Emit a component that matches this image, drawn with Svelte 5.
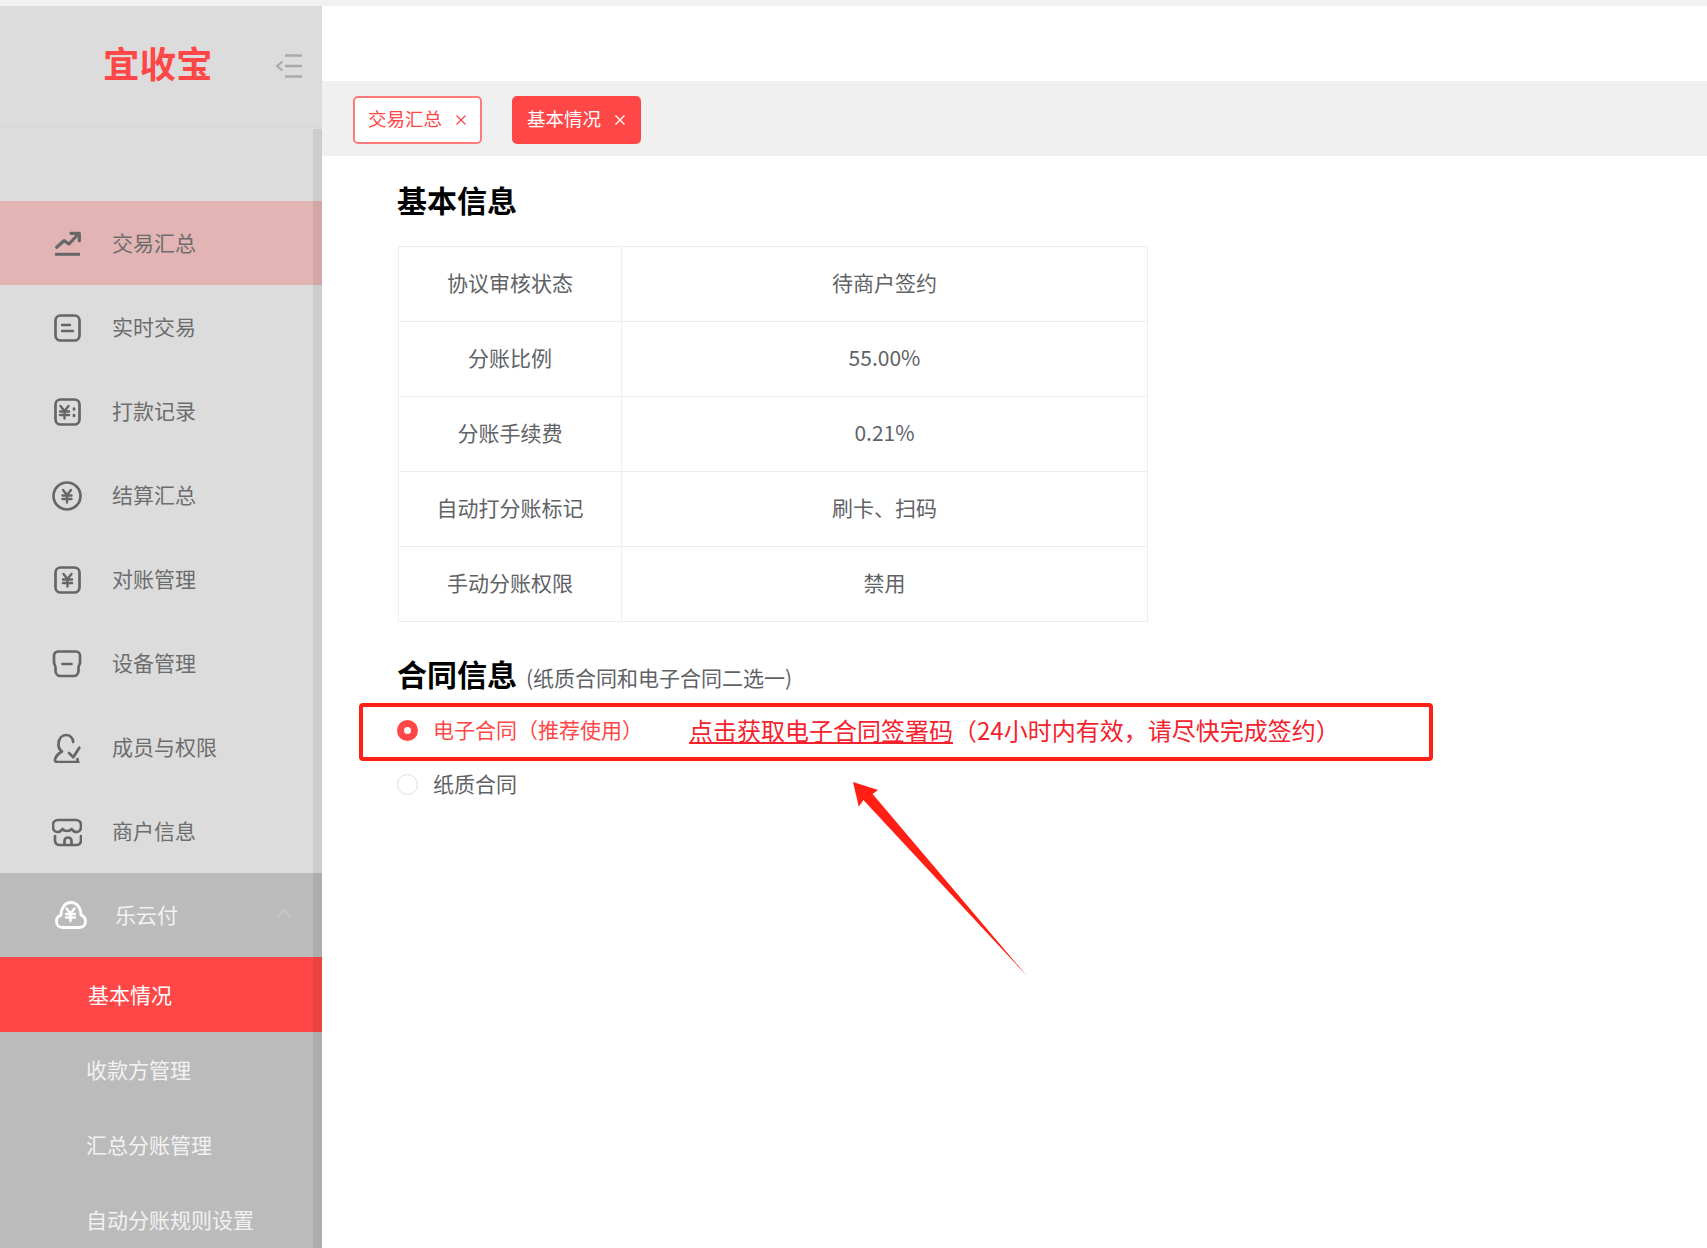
<script lang="ts">
    const menu = [
        { icon: 'trend', label: '交易汇总', active: true },
        { icon: 'doc', label: '实时交易' },
        { icon: 'pay', label: '打款记录' },
        { icon: 'settle', label: '结算汇总' },
        { icon: 'check', label: '对账管理' },
        { icon: 'device', label: '设备管理' },
        { icon: 'member', label: '成员与权限' },
        { icon: 'shop', label: '商户信息' }
    ];

    const subMenu = [
        { label: '基本情况', active: true },
        { label: '收款方管理' },
        { label: '汇总分账管理' },
        { label: '自动分账规则设置' }
    ];

    const rows = [
        ['协议审核状态', '待商户签约'],
        ['分账比例', '55.00%'],
        ['分账手续费', '0.21%'],
        ['自动打分账标记', '刷卡、扫码'],
        ['手动分账权限', '禁用']
    ];

    const tabs = [
        { label: '交易汇总', active: false },
        { label: '基本情况', active: true }
    ];
</script>

{#snippet yen(cx: number, cy: number)}
    <path d={`M${cx - 4} ${cy - 6}l4 5 4-5M${cx} ${cy - 1}v7.500M${cx - 4.500} ${cy - 0.500}h9M${cx - 4.500} ${cy + 3}h9`} stroke-width="2.400" />
{/snippet}

<div class="page">
    <div class="topstrip"></div>
    <div class="body">
        <aside class="sidebar">
            <div class="brand">
                <span class="logo">宜收宝</span>
                <svg class="collapse" viewBox="0 0 27 24" fill="none" stroke="currentColor" stroke-width="2.600">
                    <path d="M10 2h17M10 12.500h17M10 23h17" />
                    <path d="M7.500 8l-5.500 4.500 5.500 4.500" stroke-width="2" />
                </svg>
            </div>
            <nav class="nav">
                {#each menu as m}
                    <div class="item" class:active={m.active}>
                        <svg class="icon" viewBox="0 0 30 30" fill="none" stroke="currentColor" stroke-width="2.700" stroke-linecap="round" stroke-linejoin="round">
                            {#if m.icon === 'trend'}
                                <path d="M4.700 18.300L12 11.700l5 3.300L26.300 5" stroke-width="3.200" />
                                <path d="M19 4.300h8.300v7.400" stroke-width="3.200" />
                                <path d="M3 25.300h25" stroke-width="3" stroke-linecap="butt" />
                            {:else if m.icon === 'doc'}
                                <rect x="3.500" y="2.500" width="24" height="25" rx="5" />
                                <path d="M10 12h8M10 18h11" stroke-width="2.400" />
                            {:else if m.icon === 'pay'}
                                <rect x="3.500" y="2.500" width="24" height="25" rx="5" />
                                {@render yen(12.500, 15)}
                                <path d="M22 11.500v1M22 18v1" />
                            {:else if m.icon === 'settle'}
                                <circle cx="15" cy="15" r="13.500" />
                                {@render yen(15, 15)}
                            {:else if m.icon === 'check'}
                                <rect x="3.500" y="2.500" width="24" height="25" rx="5" />
                                {@render yen(15.500, 15)}
                            {:else if m.icon === 'device'}
                                <path d="M6 2.500h18a4 4 0 0 1 4 4v7c0 2-1.500 3-1.500 5v3.500a5 5 0 0 1-5 5H8.500a5 5 0 0 1-5-5V18.500c0-2-1.500-3-1.500-5v-7a4 4 0 0 1 4-4z" />
                                <path d="M10.500 15h9" />
                            {:else if m.icon === 'member'}
                                <path d="M26.300 29H5c-2 0-2.500-2-1.500-4 1-2.500 3.500-5 6.500-6.500-2.500-2-4-5-3.500-8C7 5.500 10 2 14 2s6.800 3 7.200 7" />
                                <path d="M17 20l4.300 4.300 6-9.600" />
                                <path d="M25.500 26v3" />
                            {:else}
                                <path d="M6 3h18a5 5 0 0 1 5 5v2c0 3-2 5-4.500 5-2 0-4-1.500-5-3-1 1.500-3 2-4.500 2s-3.500-.5-4.500-2c-1 1.500-3 3-5 3-2.500 0-4.500-2-4.500-5V8a5 5 0 0 1 5-5z" />
                                <path d="M3 19v4.500A4.500 4.500 0 0 0 7.500 28h17a4.500 4.500 0 0 0 4.500-4.500V19" />
                                <path d="M12.500 27v-3a3.500 3.500 0 0 1 7 0v3" />
                            {/if}
                        </svg>
                        <span>{m.label}</span>
                    </div>
                {/each}

                <div class="group">
                    <svg class="cloud" viewBox="0 0 32 28" fill="none" stroke="currentColor" stroke-width="2.800" stroke-linecap="round" stroke-linejoin="round">
                        <path d="M7.500 26.500C4 26.500 1.500 24 1.500 20.500 1.500 17.500 3.500 15 6 14.200 6 7 10 1.500 16 1.500S26 7 26 14.200c2.500.8 4.500 3.300 4.500 6.300 0 3.500-2.500 6-6 6z" />
                        {@render yen(15.500, 13.500)}
                    </svg>
                    <span>乐云付</span>
                    <svg class="chevron" viewBox="0 0 16 9" fill="none" stroke="currentColor" stroke-width="1.300">
                        <path d="M1 8l7-7 7 7" />
                    </svg>
                </div>
                {#each subMenu as s}
                    <div class="subitem" class:active={s.active}><span>{s.label}</span></div>
                {/each}
            </nav>
            <div class="scrollbar"></div>
        </aside>

        <main class="main">
            <div class="tabs">
                {#each tabs as t}
                    <div class="tab" class:active={t.active}>
                        <span>{t.label}</span>
                        <svg viewBox="0 0 12 12" fill="none" stroke="currentColor" stroke-width="1.300">
                            <path d="M1.500 1.500l9 9M10.500 1.500l-9 9" />
                        </svg>
                    </div>
                {/each}
            </div>

            <section class="content">
                <h2 class="title">基本信息</h2>
                <table class="info">
                    <tbody>
                        {#each rows as r}
                            <tr>
                                <td class="key">{r[0]}</td>
                                <td>{r[1]}</td>
                            </tr>
                        {/each}
                    </tbody>
                </table>

                <h2 class="title contract">合同信息<small>(纸质合同和电子合同二选一)</small></h2>

                <div class="radio-row selected">
                    <span class="radio on"></span>
                    <span class="radio-label">电子合同（推荐使用）</span>
                    <span class="sign"><u>点击获取电子合同签署码</u>（24小时内有效，请尽快完成签约）</span>
                </div>
                <div class="radio-row">
                    <span class="radio"></span>
                    <span class="radio-label">纸质合同</span>
                </div>
            </section>
        </main>
    </div>

    <svg class="arrow" viewBox="0 0 190 205" aria-hidden="true">
        <polygon points="3,4 28,12 22.600,16 177,198 13.400,22 8.800,28.700" />
    </svg>
</div>

<style>
    :global(body) {
        margin: 0;
        background: #fff;
    }

    .page {
        position: relative;
        height: 1248px;
        overflow: hidden;
        font-family: "Noto Sans CJK SC", "Noto Sans", sans-serif;
        font-size: 21px;
        color: #606266;
    }

    .topstrip {
        height: 6px;
        background: #f1f1f1;
    }

    .body {
        display: flex;
        height: 1242px;
    }

    /* sidebar */
    .sidebar {
        position: relative;
        flex: 0 0 322px;
        background: #dcdcdc;
        overflow: hidden;
    }

    .brand {
        height: 118px;
        padding-bottom: 2px;
        display: flex;
        align-items: center;
        border-bottom: 1px solid #d6d6d6;
    }

    .logo {
        margin-left: 103px;
        margin-bottom: 4px;
        font-size: 36.500px;
        font-weight: 700;
        line-height: 1;
        color: #ff4747;
    }

    .collapse {
        margin-left: 62px;
        width: 27px;
        height: 25px;
        color: #a9a9a9;
    }

    .nav {
        padding-top: 74px;
    }

    .item {
        height: 84px;
        display: flex;
        align-items: center;
        padding-left: 52px;
        color: #6d6d6d;
    }

    .item span,
    .subitem span {
        padding-bottom: 2px;
    }

    .item.active {
        background: #e2b4b4;
    }

    .icon {
        flex: 0 0 30px;
        width: 30px;
        height: 30px;
        margin-top: 2px;
        margin-right: 30px;
        color: #666;
    }

    .group {
        height: 84px;
        display: flex;
        align-items: center;
        padding-left: 55px;
        background: #bbb;
        color: #f2f2f2;
    }

    .group span {
        padding-bottom: 3px;
    }

    .cloud {
        width: 32px;
        height: 28px;
        margin-right: 28px;
        color: #fff;
    }

    .chevron {
        width: 16px;
        height: 9px;
        margin-left: 98px;
        margin-top: -4px;
        color: #cbcbcb;
    }

    .subitem {
        height: 75px;
        display: flex;
        align-items: center;
        padding-left: 86px;
        background: #bbb;
        color: #f2f2f2;
    }

    .subitem.active {
        background: #ff4747;
        color: #fff;
        padding-left: 88px;
    }

    .scrollbar {
        position: absolute;
        top: 123px;
        right: 0;
        bottom: 0;
        width: 9px;
        background: rgba(0, 0, 0, 0.07);
    }

    /* tabs */
    .main {
        flex: 1;
        padding-top: 75px;
        min-width: 0;
    }

    .tabs {
        height: 75px;
        display: flex;
        align-items: center;
        gap: 30px;
        padding-left: 31px;
        background: #f0f0f0;
    }

    .tab {
        width: 129px;
        height: 48px;
        margin-top: 2px;
        box-sizing: border-box;
        display: flex;
        align-items: center;
        gap: 13px;
        padding-left: 13px;
        background: #fff;
        border: 2px solid #ff7a7a;
        border-radius: 5px;
        color: #ff4747;
        font-size: 18.500px;
    }

    .tab span {
        padding-bottom: 4px;
    }

    .tab.active {
        background: #ff4747;
        border-color: #ff4747;
        color: #fff;
    }

    .tab svg {
        width: 12px;
        height: 12px;
    }

    /* content */
    .content {
        padding: 25px 0 0 75px;
    }

    .title {
        margin: 0 0 29px;
        font-size: 30px;
        font-weight: 700;
        line-height: 36px;
        color: #000;
    }

    .title small {
        margin-left: 9px;
        font-size: 21px;
        font-weight: 400;
        color: #606266;
    }

    .contract {
        margin: 33px 0 8px;
    }

    .info {
        width: 750px;
        margin-left: 1px;
        border-collapse: collapse;
        table-layout: fixed;
    }

    .info td {
        height: 75px;
        padding: 0 0 5px;
        box-sizing: border-box;
        text-align: center;
        border: 1px solid #ebeef5;
    }

    .info .key {
        width: 223px;
    }

    .radio-row {
        display: flex;
        align-items: center;
        height: 30px;
        margin-top: 8px;
        color: #606266;
    }

    .radio-row.selected {
        box-sizing: border-box;
        width: 1074px;
        height: 58px;
        margin: 0 0 8px -38px;
        padding-left: 34px;
        padding-bottom: 4px;
        border: 4px solid #ff1f14;
        border-radius: 4px;
        color: #ff4747;
    }

    .radio-label {
        padding-bottom: 2px;
    }

    .sign {
        margin-left: 46px;
        padding-bottom: 2px;
        font-size: 24px;
        color: #f5222d;
    }

    .radio {
        flex: 0 0 21px;
        height: 21px;
        box-sizing: border-box;
        margin-right: 15px;
        border: 1px solid #dcdfe6;
        border-radius: 50%;
        background: #fff;
    }

    .radio.on {
        border: 7px solid #ff4747;
    }

    .arrow {
        position: absolute;
        left: 850px;
        top: 778px;
        width: 190px;
        height: 205px;
    }

    .arrow polygon {
        fill: #ff1f14;
    }
</style>
